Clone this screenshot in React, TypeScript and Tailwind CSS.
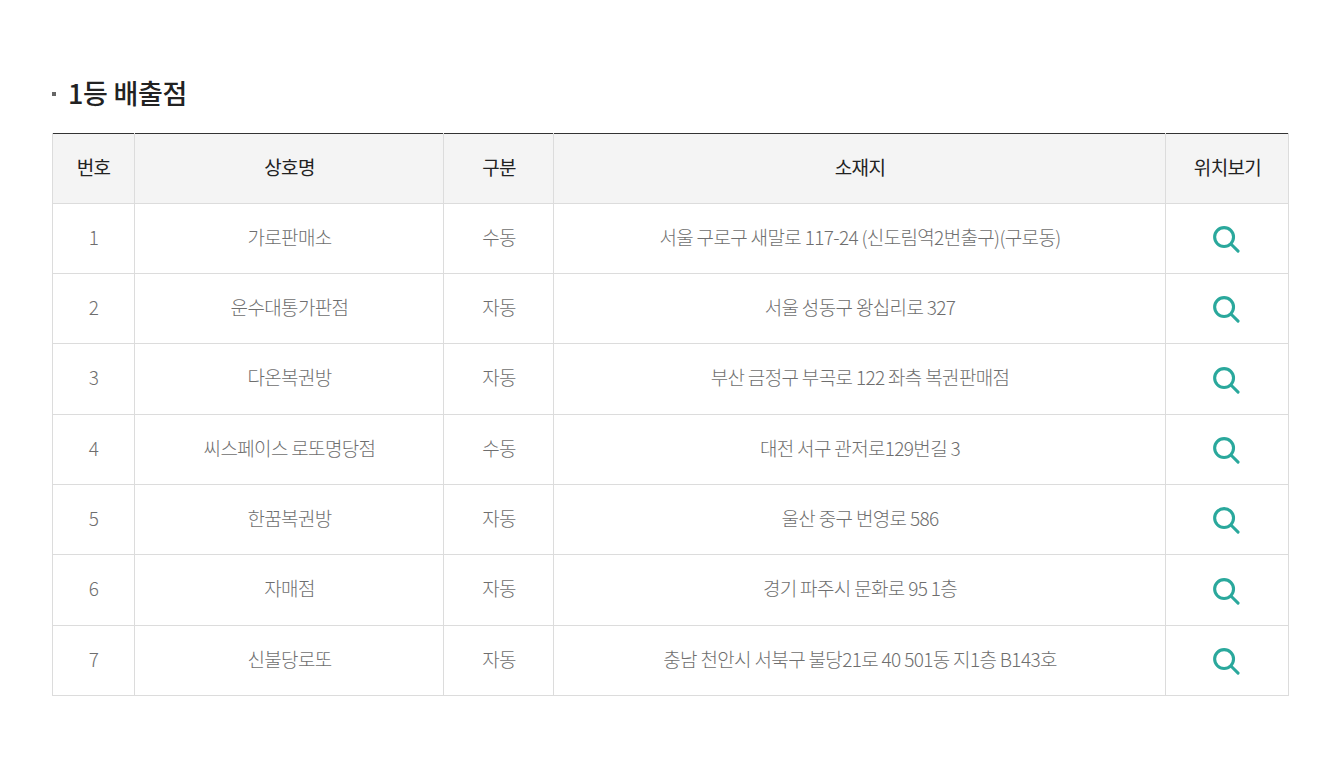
import clsx from 'clsx';

const FONT = "font-['Noto_Sans_CJK_KR','Noto_Sans_KR',sans-serif]";

interface Shop {
  no: number;
  name: string;
  kind: string;
  address: string;
}

const SHOPS: Shop[] = [
  { no: 1, name: '가로판매소', kind: '수동', address: '서울 구로구 새말로 117-24 (신도림역2번출구)(구로동)' },
  { no: 2, name: '운수대통가판점', kind: '자동', address: '서울 성동구 왕십리로 327' },
  { no: 3, name: '다온복권방', kind: '자동', address: '부산 금정구 부곡로 122 좌측 복권판매점' },
  { no: 4, name: '씨스페이스 로또명당점', kind: '수동', address: '대전 서구 관저로129번길 3' },
  { no: 5, name: '한꿈복권방', kind: '자동', address: '울산 중구 번영로 586' },
  { no: 6, name: '자매점', kind: '자동', address: '경기 파주시 문화로 95 1층' },
  { no: 7, name: '신불당로또', kind: '자동', address: '충남 천안시 서북구 불당21로 40 501동 지1층 B143호' },
];

const HEADERS = ['번호', '상호명', '구분', '소재지', '위치보기'];

function SearchIcon() {
  return (
    <svg width="27" height="27" viewBox="0 0 28 28" fill="none" className="mx-auto block" aria-hidden>
      <circle cx="11.5" cy="11.5" r="9.8" stroke="#2aa89c" strokeWidth="3.2" />
      <path d="M18.6 18.6 L26 26" stroke="#2aa89c" strokeWidth="3.1" strokeLinecap="round" />
    </svg>
  );
}

export default function App() {
  return (
    <div className={`${FONT} min-h-[771px] bg-white px-[52px] pt-[71px]`}>
      <h3 className="flex h-[44px] items-center text-[27px] font-medium tracking-[-0.3px] text-[#222]">
        <span className="mr-[12px] mt-[2px] h-[4px] w-[4px] bg-[#666]" />
        1등 배출점
      </h3>
      <table className="mt-[18px] w-[1236px] table-fixed border-collapse border-t border-t-[#333]">
        <colgroup>
          <col className="w-[82px]" />
          <col className="w-[309px]" />
          <col className="w-[110px]" />
          <col className="w-[612px]" />
          <col className="w-[123px]" />
        </colgroup>
        <thead>
          <tr className="h-[70px] bg-[#f4f4f4]">
            {HEADERS.map((h, i) => (
              <th
                key={h}
                className={clsx(
                  'border-x border-b border-[#dcdcdc] pb-[3px] text-[19px] font-normal tracking-[-0.65px] text-[#222]',
                  i > 0 && 'pl-[1px]',
                )}
              >
                {h}
              </th>
            ))}
          </tr>
        </thead>
        <tbody>
          {SHOPS.map((s, i) => (
            <tr
              key={s.no}
              className={clsx(
                'text-center text-[19px] font-light tracking-[-0.65px] text-[#6e6e6e]',
                i % 3 === 2 ? 'h-[71px]' : 'h-[70px]',
              )}
            >
              <td className="border border-[#dcdcdc] pb-[3px]">{s.no}</td>
              <td className="border border-[#dcdcdc] pb-[3px] pl-[1px]">{s.name}</td>
              <td className="border border-[#dcdcdc] pb-[3px] pl-[1px]">{s.kind}</td>
              <td className="border border-[#dcdcdc] pb-[3px] pl-[1px]">{s.address}</td>
              <td className="border border-[#dcdcdc] pt-[2px] pr-[2px]">
                <SearchIcon />
              </td>
            </tr>
          ))}
        </tbody>
      </table>
    </div>
  );
}
